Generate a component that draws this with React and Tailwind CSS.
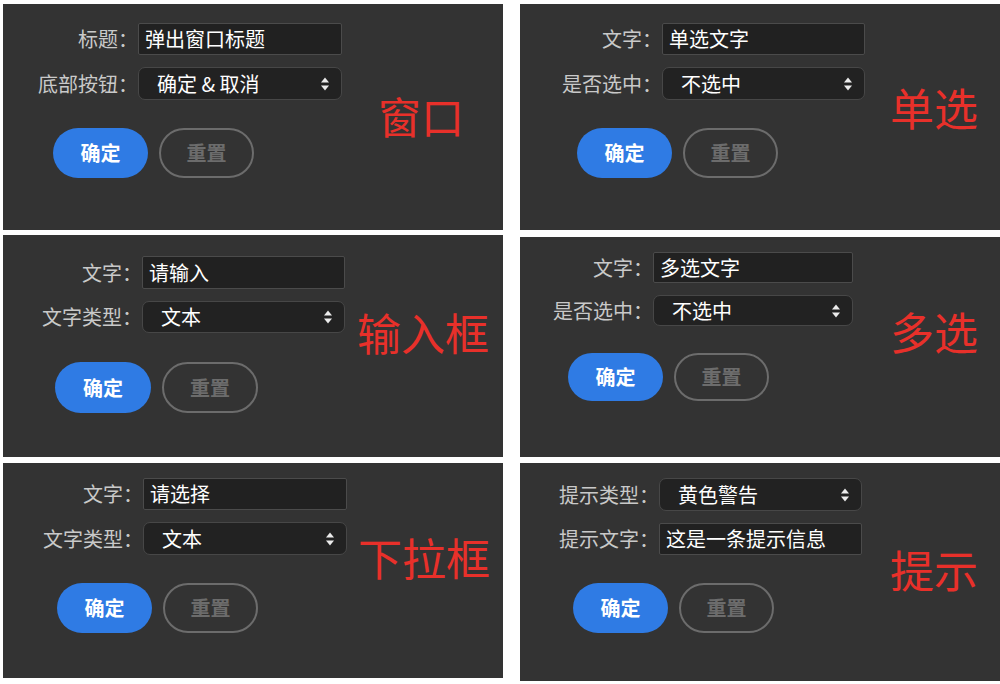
const font = "font-['PingFang_SC','Noto_Sans_CJK_SC',sans-serif]";

const Arrows = () => (
  <svg width="10" height="16" viewBox="0 0 10 16" className="shrink-0">
    <path d="M5 1.5 L9 6.5 L1 6.5 Z" fill="#ececec" />
    <path d="M5 14.5 L9 9.5 L1 9.5 Z" fill="#ececec" />
  </svg>
);

const Input = ({ value, size }) => (
  <div
    className={`flex items-center pl-[6px] bg-[#212121] border border-[#4b4b4b] rounded-[2px] text-white text-[20px] leading-none ${size}`}
  >
    {value}
  </div>
);

const Select = ({ value, size }) => (
  <div
    className={`flex items-center justify-between pl-[18px] pr-[11px] bg-[#222222] border border-[#474747] rounded-[7px] text-white text-[20px] leading-none ${size}`}
  >
    <span>{value}</span>
    <Arrows />
  </div>
);

const Row = ({ label, labelW, children }) => (
  <div className="flex items-center">
    <div className={`text-right text-[#c9c9c9] text-[20px] leading-none whitespace-nowrap ${labelW}`}>
      {label}：
    </div>
    {children}
  </div>
);

const Buttons = ({ className, size }) => (
  <div className={`flex gap-[11px] ${className}`}>
    <button
      className={`rounded-full bg-[#2f7be4] text-white text-[20px] font-semibold ${size}`}
    >
      确定
    </button>
    <button
      className={`rounded-full border-2 border-[#6c6c6c] text-[#6c6c6c] text-[20px] font-semibold ${size}`}
    >
      重置
    </button>
  </div>
);

const Tag = ({ text, className }) => (
  <div className={`text-[#e8302a] leading-none whitespace-nowrap ${className}`}>{text}</div>
);

export default function App() {
  return (
    <div className={`w-[1000px] h-[684px] bg-white flex ${font}`}>
      {/* left column */}
      <div className="ml-[3px] w-[500px] flex flex-col pt-[4px]">
        <div className="h-[226px] bg-[#333333] flex items-start">
          <div className="pt-[19px] flex flex-col gap-[12px]">
            <Row label="标题" labelW="w-[135px]">
              <Input value="弹出窗口标题" size="w-[204px] h-[32px]" />
            </Row>
            <Row label="底部按钮" labelW="w-[135px]">
              <Select value="确定 & 取消" size="w-[204px] h-[33px]" />
            </Row>
            <Buttons className="ml-[50px] mt-[16px]" size="w-[95px] h-[50px]" />
          </div>
          <Tag text="窗口" className="ml-[36px] mt-[90px] text-[43px]" />
        </div>

        <div className="mt-[5px] h-[222px] bg-[#333333] flex items-start">
          <div className="pt-[21px] flex flex-col gap-[12px]">
            <Row label="文字" labelW="w-[139px]">
              <Input value="请输入" size="w-[203px] h-[33px]" />
            </Row>
            <Row label="文字类型" labelW="w-[139px]">
              <Select value="文本" size="w-[203px] h-[32px]" />
            </Row>
            <Buttons className="ml-[52px] mt-[17px]" size="w-[96px] h-[51px]" />
          </div>
          <Tag text="输入框" className="ml-[12px] mt-[75px] text-[44px]" />
        </div>

        <div className="mt-[6px] h-[215px] bg-[#333333] flex items-start">
          <div className="pt-[15px] flex flex-col gap-[12px]">
            <Row label="文字" labelW="w-[140px]">
              <Input value="请选择" size="w-[204px] h-[32px]" />
            </Row>
            <Row label="文字类型" labelW="w-[140px]">
              <Select value="文本" size="w-[204px] h-[33px]" />
            </Row>
            <Buttons className="ml-[54px] mt-[16px]" size="w-[95px] h-[50px]" />
          </div>
          <Tag text="下拉框" className="ml-[11px] mt-[72px] text-[44px]" />
        </div>
      </div>

      {/* right column */}
      <div className="ml-[17px] w-[480px] flex flex-col pt-[4px]">
        <div className="h-[226px] bg-[#333333] flex items-start">
          <div className="pt-[19px] flex flex-col gap-[12px]">
            <Row label="文字" labelW="w-[142px]">
              <Input value="单选文字" size="w-[203px] h-[32px]" />
            </Row>
            <Row label="是否选中" labelW="w-[142px]">
              <Select value="不选中" size="w-[203px] h-[33px]" />
            </Row>
            <Buttons className="ml-[57px] mt-[16px]" size="w-[95px] h-[50px]" />
          </div>
          <Tag text="单选" className="ml-[25px] mt-[81px] text-[44px]" />
        </div>

        <div className="mt-[7px] h-[220px] bg-[#333333] flex items-start">
          <div className="pt-[15px] flex flex-col gap-[12px]">
            <Row label="文字" labelW="w-[133px]">
              <Input value="多选文字" size="w-[200px] h-[31px]" />
            </Row>
            <Row label="是否选中" labelW="w-[133px]">
              <Select value="不选中" size="w-[200px] h-[31px]" />
            </Row>
            <Buttons className="ml-[48px] mt-[15px]" size="w-[95px] h-[48px]" />
          </div>
          <Tag text="多选" className="ml-[37px] mt-[72px] text-[44px]" />
        </div>

        <div className="mt-[6px] h-[218px] bg-[#333333] flex items-start">
          <div className="pt-[15px] flex flex-col gap-[12px]">
            <Row label="提示类型" labelW="w-[139px]">
              <Select value="黄色警告" size="w-[203px] h-[33px]" />
            </Row>
            <Row label="提示文字" labelW="w-[139px]">
              <Input value="这是一条提示信息" size="w-[203px] h-[32px]" />
            </Row>
            <Buttons className="ml-[53px] mt-[16px]" size="w-[95px] h-[50px]" />
          </div>
          <Tag text="提示" className="ml-[28px] mt-[84px] text-[44px]" />
        </div>
      </div>
    </div>
  );
}
